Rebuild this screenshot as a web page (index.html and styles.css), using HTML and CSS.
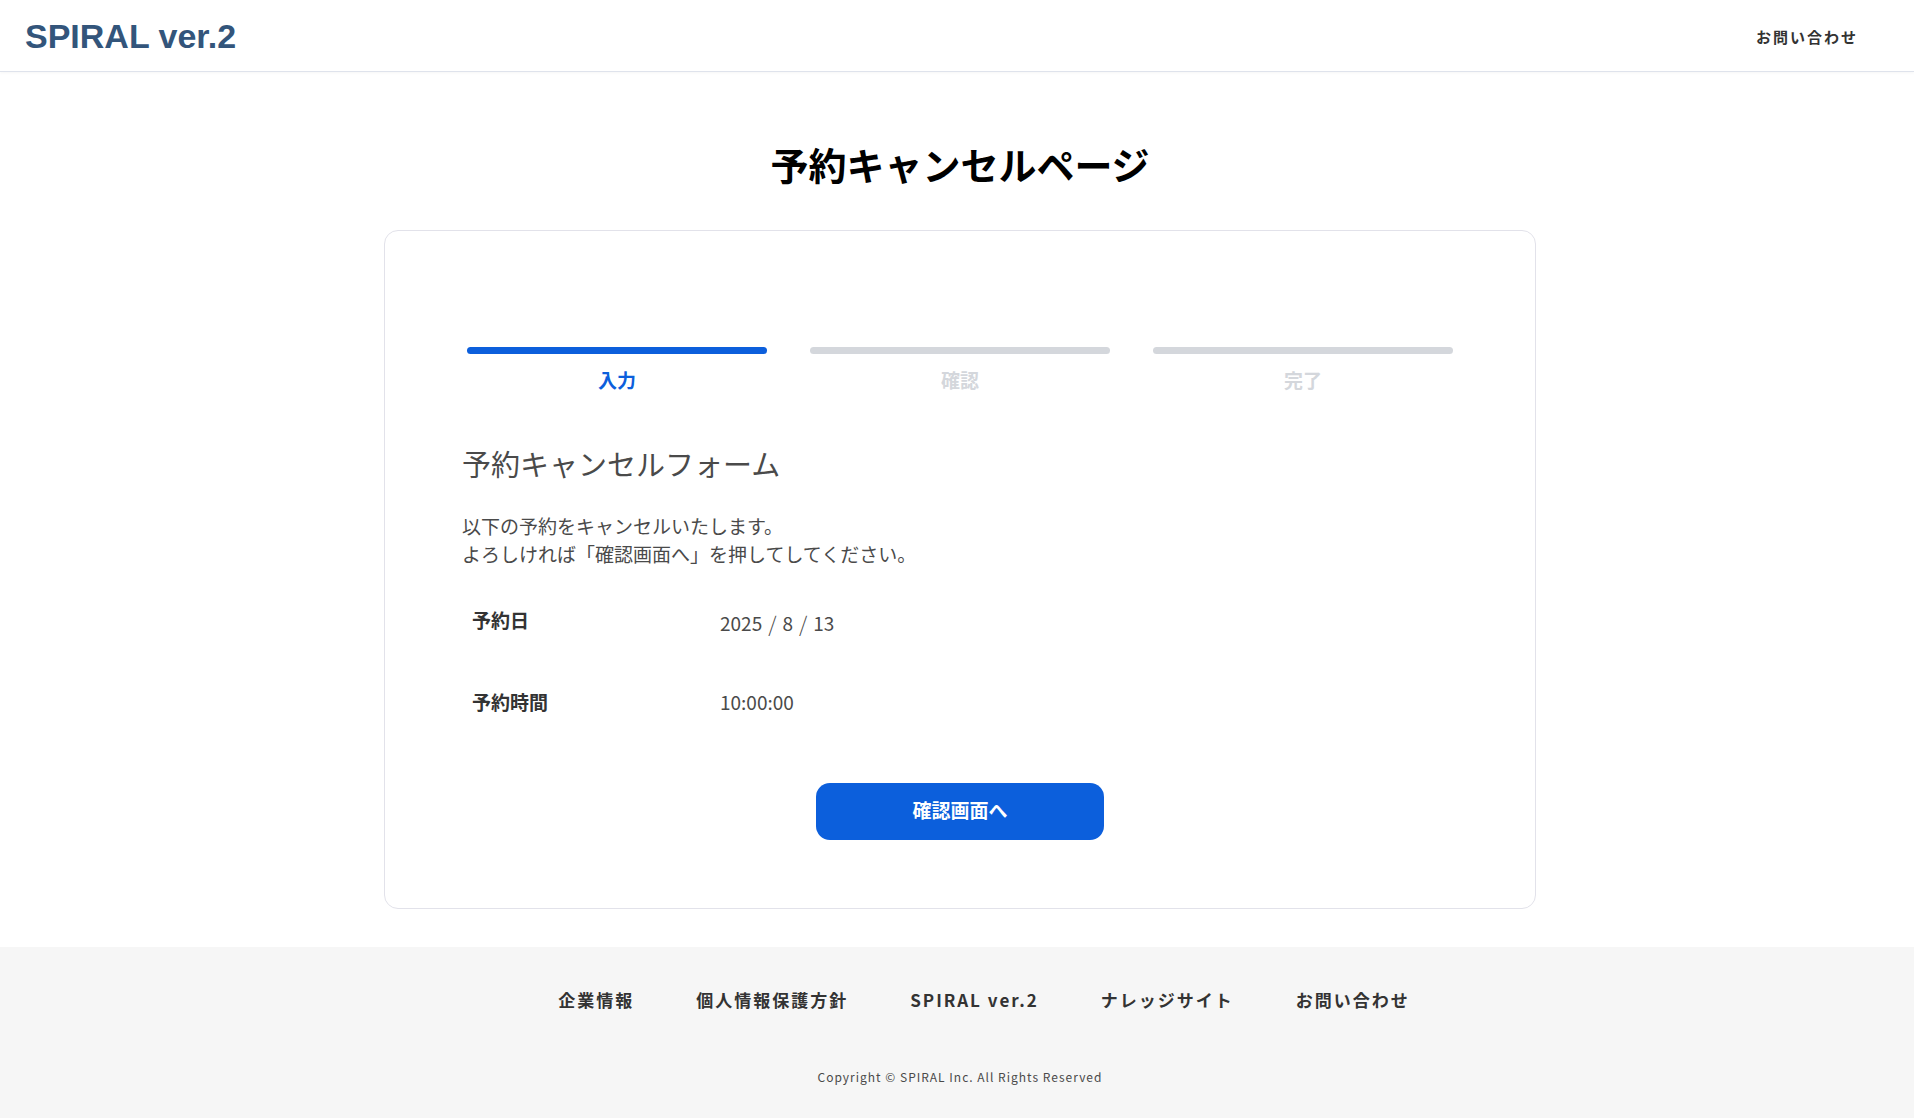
FILE: index.html
```html
<!DOCTYPE html>
<html lang="ja">
<head>
<meta charset="utf-8">
<meta name="viewport" content="width=device-width, initial-scale=1">
<title>予約キャンセルページ</title>
<link rel="stylesheet" href="styles.css">
</head>
<body>
<header class="header">
  <a class="logo" href="#">SPIRAL ver.2</a>
  <nav><a class="header-link" href="#">お問い合わせ</a></nav>
</header>
<main class="main">
  <h1 class="page-title">予約キャンセルページ</h1>
  <form class="card">
    <ol class="steps">
      <li class="step step-current">入力</li>
      <li class="step">確認</li>
      <li class="step">完了</li>
    </ol>
    <h2 class="form-title">予約キャンセルフォーム</h2>
    <p class="lead">以下の予約をキャンセルいたします。<br>よろしければ「確認画面へ」を押してしてください。</p>
    <dl class="fields">
      <div class="field"><dt>予約日</dt><dd class="date"><span>2025</span><span class="slash">/</span><span>8</span><span class="slash">/</span><span>13</span></dd></div>
      <div class="field"><dt>予約時間</dt><dd>10:00:00</dd></div>
    </dl>
    <button class="submit" type="button">確認画面へ</button>
  </form>
</main>
<footer class="footer">
  <nav class="footer-nav">
    <a href="#">企業情報</a>
    <a href="#">個人情報保護方針</a>
    <a href="#">SPIRAL ver.2</a>
    <a href="#">ナレッジサイト</a>
    <a href="#">お問い合わせ</a>
  </nav>
  <p class="copyright">Copyright © SPIRAL Inc. All Rights Reserved</p>
</footer>
</body>
</html>
```
FILE: styles.css
```css
* {
  box-sizing: border-box;
}

body {
  display: flex;
  flex-direction: column;
  min-height: 100vh;
  margin: 0;
  background: #fff;
  color: #4a4a4a;
  font-family: "Noto Sans CJK JP", sans-serif;
  font-size: 19px;
  line-height: 28px;
}

a {
  color: inherit;
  text-decoration: none;
}

.header {
  display: flex;
  align-items: center;
  justify-content: space-between;
  height: 72px;
  padding: 0 56px 0 25px;
  border-bottom: 1px solid #dfe3ec;
  box-shadow: 0 1px 3px rgba(0, 0, 0, 0.04);
}

.logo {
  color: #33557b;
  font-family: "Liberation Sans", Arial, sans-serif;
  font-size: 34px;
  font-weight: bold;
  line-height: 40px;
}

.header-link {
  color: #333;
  font-size: 15px;
  font-weight: bold;
  letter-spacing: 2px;
}

.main {
  padding: 62px 24px 38px 30px;
}

.page-title {
  margin: 0 0 36px;
  color: #000;
  font-size: 38px;
  line-height: 60px;
  text-align: center;
}

.card {
  max-width: 1152px;
  margin: 0 auto;
  padding: 116px 77px 68px;
  border: 1px solid #e2e2ea;
  border-radius: 14px;
}

.steps {
  display: grid;
  grid-template-columns: repeat(3, 1fr);
  gap: 43px;
  margin: 0 0 47px;
  padding: 0 5px;
  list-style: none;
}

.step {
  color: #d4d7dc;
  font-weight: bold;
  text-align: center;
}

.step::before {
  content: "";
  display: block;
  height: 7px;
  margin-bottom: 12px;
  border-radius: 4px;
  background: #d4d7dc;
}

.step-current {
  color: #0c5fdc;
}

.step-current::before {
  background: #0c5fdc;
}

.form-title {
  margin: 0 0 27px;
  font-size: 29px;
  font-weight: normal;
  line-height: 44px;
}

.lead {
  margin: 0 0 38px;
}

.fields {
  margin: 0 0 67px;
}

.field {
  display: flex;
  padding: 0 10px;
}

.field + .field {
  margin-top: 51px;
}

.field dt {
  width: 248px;
  color: #333;
  font-weight: bold;
}

.field dd {
  margin: 0;
}

.field .date {
  display: flex;
  gap: 6px;
  padding-top: 3px;
}

.slash {
  font-size: 21px;
  font-weight: 300;
}

.submit {
  display: block;
  width: 288px;
  height: 57px;
  margin: 0 auto;
  padding: 0 0 4px;
  border: 0;
  border-radius: 14px;
  background: #0c5fdc;
  color: #fff;
  font: bold 19px/28px "Noto Sans CJK JP", sans-serif;
}

.footer {
  flex: 1;
  padding: 39px 24px 26px 30px;
  background: #f6f6f6;
  text-align: center;
}

.footer-nav {
  display: flex;
  justify-content: center;
  gap: 62px;
  padding-left: 48px;
  color: #333;
  font-size: 17px;
  font-weight: bold;
  letter-spacing: 2px;
}

.copyright {
  margin: 49px 0 0;
  font-size: 12px;
  letter-spacing: 1px;
}
```
